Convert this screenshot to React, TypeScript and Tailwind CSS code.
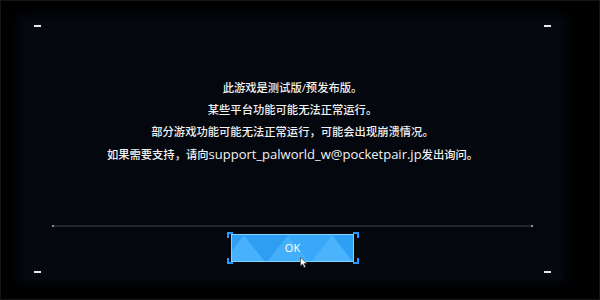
import React from "react";

const Email = () => (
  <span className="text-[13px]">support_palworld_w@pocketpair.jp</span>
);

const lines: React.ReactNode[] = [
  "此游戏是测试版/预发布版。",
  "某些平台功能可能无法正常运行。",
  "部分游戏功能可能无法正常运行，可能会出现崩溃情况。",
  <>
    如果需要支持，请向
    <Email />
    发出询问。
  </>,
];

// little white dash in each corner of the panel
const CornerMark = ({ className }: { className: string }) => (
  <div className={`absolute w-[7px] h-[2px] bg-[#e8e8e8] ${className}`} />
);

const Bracket = ({ className }: { className: string }) => (
  <div className={`absolute w-[6px] h-[6px] border-[#1e9cff] ${className}`} />
);

const OkButton = () => (
  <div className="relative w-[132px] h-[32px] flex items-center justify-center">
    <Bracket className="left-0 top-0 border-l-2 border-t-2" />
    <Bracket className="right-0 top-0 border-r-2 border-t-2" />
    <Bracket className="left-0 bottom-0 border-l-2 border-b-2" />
    <Bracket className="right-0 bottom-0 border-r-2 border-b-2" />
    <button className="relative w-[123px] h-[28px] border border-[#7fd4ff] bg-[#2d9ff4] overflow-hidden flex items-center justify-center">
      <svg
        className="absolute inset-0"
        width="123"
        height="28"
        viewBox="0 0 123 28"
      >
        <polygon points="-10,28 12,0 34,28" fill="#47b1fb" />
        <polygon points="34,28 56,0 78,28" fill="#45b0fa" />
        <polygon points="56,0 78,28 100,0" fill="#3aa8f8" />
        <polygon points="78,28 100,0 122,28" fill="#4ab3fc" />
        <polygon points="12,0 34,28 56,0" fill="#2e9ef3" />
      </svg>
      <span
        className="relative text-white text-[11px] font-medium"
        style={{ fontFamily: '"Open Sans", "Liberation Sans", sans-serif' }}
      >
        OK
      </span>
    </button>
  </div>
);

export default function App() {
  return (
    <div className="w-[600px] h-[300px] bg-black border border-[#161616] overflow-hidden">
      <div className="relative ml-[21px] mt-[17px] w-[541px] h-[262px] bg-[#04070e] shadow-[0_0_10px_4px_#04070e] flex flex-col items-center">
        <CornerMark className="left-[12px] top-[7px]" />
        <CornerMark className="right-[12px] top-[7px]" />
        <CornerMark className="left-[12px] bottom-[7px]" />
        <CornerMark className="right-[12px] bottom-[7px]" />

        <div
          className="mt-[59px] flex flex-col items-center text-[11.3px] leading-[22px] font-medium text-[#f2f2f2]"
          style={{
            fontFamily: '"Open Sans", "Noto Sans CJK SC", sans-serif',
          }}
        >
          {lines.map((l, i) => (
            <p key={i} className="h-[22px]">
              {l}
            </p>
          ))}
        </div>

        <div className="mt-[60px] w-[481px] h-[2px] bg-[#22252d] flex justify-between">
          <div className="w-[2px] h-[2px] bg-[#8a8c92]" />
          <div className="w-[2px] h-[2px] bg-[#8a8c92]" />
        </div>

        <div className="mt-[5px]">
          <OkButton />
        </div>

        {/* mouse pointer resting on the button */}
        <svg
          className="absolute left-[278px] top-[239px]"
          width="8"
          height="11"
          viewBox="0 0 8 11"
        >
          <path d="M0.5 0.5 L0.5 9 L2.6 7 L4.2 10.5 L5.6 9.8 L4 6.5 L7 6.5 Z" fill="#fff" stroke="#333" strokeWidth="0.6" />
        </svg>
      </div>
    </div>
  );
}
